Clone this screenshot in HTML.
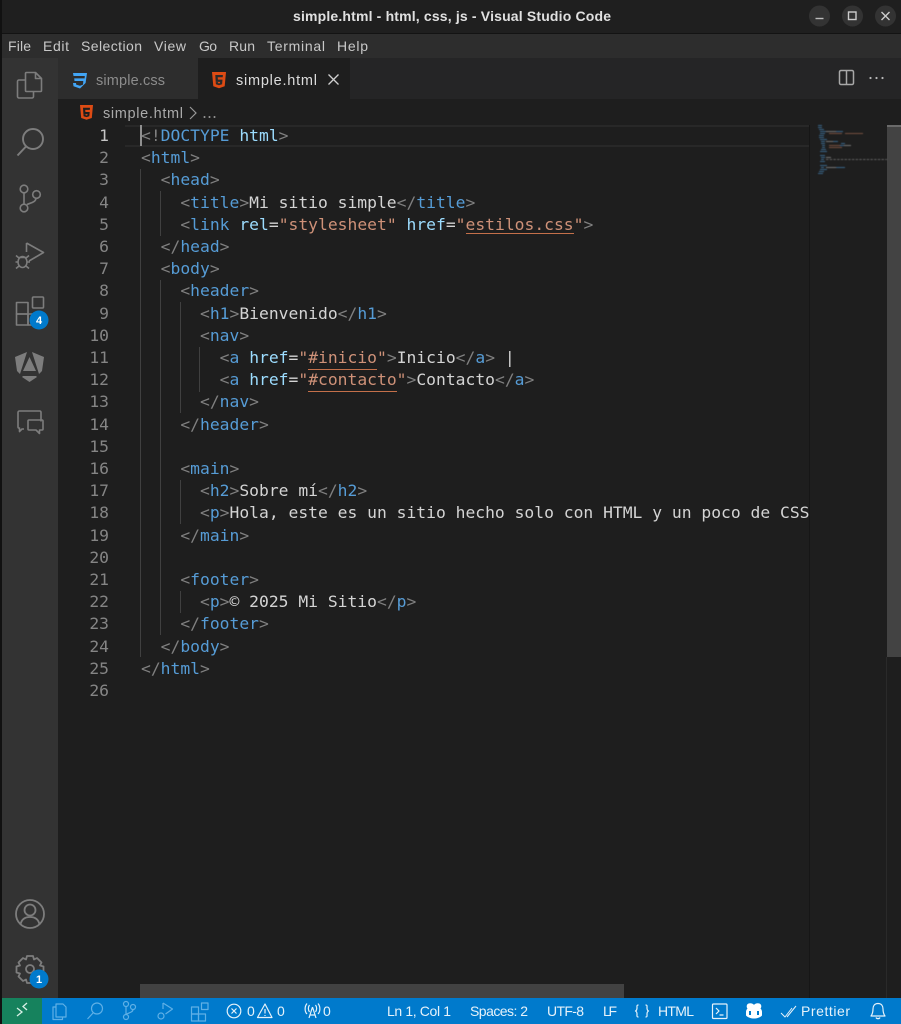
<!DOCTYPE html>
<html lang="es"><head><meta charset="utf-8"><title>simple.html - Visual Studio Code</title>
<style>
html,body{margin:0;padding:0;width:901px;height:1024px;overflow:hidden;background:#1e1e1e}
body{position:relative;filter:blur(.35px)}
.a{position:absolute}
#code,#nums{position:absolute;left:0;top:1px;width:901px;height:0}
#code div{position:absolute;left:141px;height:22px;line-height:22px;white-space:pre;font:16.33px/22px "DejaVu Sans Mono",monospace;color:#d4d4d4}
#nums div{position:absolute;width:109px;left:0;text-align:right;font:16.33px/22px "DejaVu Sans Mono",monospace;color:#858585}
.b{color:#808080}.t{color:#569cd6}.k{color:#9cdcfe}.s{color:#ce9178}
svg text{font-family:"Liberation Sans",sans-serif}
</style></head><body>
<div class="a" style="left:0;top:0;width:2px;height:1024px;background:#111"></div>
<div class="a" style="left:2px;top:0;width:899px;height:33px;background:#1f1f1f"></div>
<div class="a" style="left:2px;top:33px;width:899px;height:1px;background:#131313"></div>
<div class="a" style="left:2px;top:34px;width:899px;height:24px;background:#2d2d2d"></div>
<div class="a" style="left:2px;top:58px;width:56px;height:941px;background:#333"></div>
<div class="a" style="left:58px;top:58px;width:843px;height:41px;background:#252526"></div>
<div class="a" style="left:58px;top:58px;width:140px;height:41px;background:#2d2d2d"></div>
<div class="a" style="left:198px;top:58px;width:152px;height:41px;background:#1e1e1e"></div>
<div class="a" style="left:58px;top:99px;width:843px;height:900px;background:#1e1e1e"></div>
<div class="a" style="left:125px;top:125px;width:684px;height:22px;box-sizing:border-box;border-top:2px solid #282828;border-bottom:2px solid #282828"></div>
<div class="a" style="left:809px;top:125px;width:1px;height:874px;background:#161616"></div>
<div class="a" style="left:887px;top:125px;width:14px;height:532px;background:#434343"></div>
<div class="a" style="left:887px;top:125px;width:14px;height:2px;background:#6a6a6a"></div>
<div class="a" style="left:886px;top:657px;width:1px;height:342px;background:#2a2a2a"></div>
<div class="a" style="left:140px;top:984px;width:484px;height:14px;background:#424242"></div>
<div class="a" style="left:2px;top:998px;width:899px;height:26px;background:#007acc"></div>
<div class="a" style="left:2px;top:998px;width:40px;height:26px;background:#16825d"></div>

<div id="guides">
<div class="a" style="left:140px;top:169px;width:1px;height:488px;background:#404040"></div>
<div class="a" style="left:160px;top:191px;width:1px;height:45px;background:#404040"></div>
<div class="a" style="left:160px;top:280px;width:1px;height:355px;background:#404040"></div>
<div class="a" style="left:180px;top:302px;width:1px;height:111px;background:#404040"></div>
<div class="a" style="left:199px;top:347px;width:1px;height:45px;background:#404040"></div>
<div class="a" style="left:180px;top:480px;width:1px;height:44px;background:#404040"></div>
<div class="a" style="left:180px;top:591px;width:1px;height:22px;background:#404040"></div>
</div>

<div id="nums">
<div style="top:124px;color:#c6c6c6">1</div><div style="top:146.2px">2</div><div style="top:168.4px">3</div><div style="top:190.6px">4</div><div style="top:212.8px">5</div><div style="top:235px">6</div><div style="top:257.2px">7</div><div style="top:279.4px">8</div><div style="top:301.6px">9</div><div style="top:323.8px">10</div><div style="top:346px">11</div><div style="top:368.2px">12</div><div style="top:390.4px">13</div><div style="top:412.6px">14</div><div style="top:434.8px">15</div><div style="top:457px">16</div><div style="top:479.2px">17</div><div style="top:501.4px">18</div><div style="top:523.6px">19</div><div style="top:545.8px">20</div><div style="top:568px">21</div><div style="top:590.2px">22</div><div style="top:612.4px">23</div><div style="top:634.6px">24</div><div style="top:656.8px">25</div><div style="top:679px">26</div>
</div>

<div id="code">
<div style="top:124px"><span class="b">&lt;!</span><span class="t">DOCTYPE</span> <span class="k">html</span><span class="b">&gt;</span></div>
<div style="top:146.2px"><span class="b">&lt;</span><span class="t">html</span><span class="b">&gt;</span></div>
<div style="top:168.4px">  <span class="b">&lt;</span><span class="t">head</span><span class="b">&gt;</span></div>
<div style="top:190.6px">    <span class="b">&lt;</span><span class="t">title</span><span class="b">&gt;</span>Mi sitio simple<span class="b">&lt;/</span><span class="t">title</span><span class="b">&gt;</span></div>
<div style="top:212.8px">    <span class="b">&lt;</span><span class="t">link</span> <span class="k">rel</span>=<span class="s">"stylesheet"</span> <span class="k">href</span>=<span class="s">"estilos.css"</span><span class="b">&gt;</span></div>
<div style="top:235px">  <span class="b">&lt;/</span><span class="t">head</span><span class="b">&gt;</span></div>
<div style="top:257.2px">  <span class="b">&lt;</span><span class="t">body</span><span class="b">&gt;</span></div>
<div style="top:279.4px">    <span class="b">&lt;</span><span class="t">header</span><span class="b">&gt;</span></div>
<div style="top:301.6px">      <span class="b">&lt;</span><span class="t">h1</span><span class="b">&gt;</span>Bienvenido<span class="b">&lt;/</span><span class="t">h1</span><span class="b">&gt;</span></div>
<div style="top:323.8px">      <span class="b">&lt;</span><span class="t">nav</span><span class="b">&gt;</span></div>
<div style="top:346px">        <span class="b">&lt;</span><span class="t">a</span> <span class="k">href</span>=<span class="s">"#inicio"</span><span class="b">&gt;</span>Inicio<span class="b">&lt;/</span><span class="t">a</span><span class="b">&gt;</span> |</div>
<div style="top:368.2px">        <span class="b">&lt;</span><span class="t">a</span> <span class="k">href</span>=<span class="s">"#contacto"</span><span class="b">&gt;</span>Contacto<span class="b">&lt;/</span><span class="t">a</span><span class="b">&gt;</span></div>
<div style="top:390.4px">      <span class="b">&lt;/</span><span class="t">nav</span><span class="b">&gt;</span></div>
<div style="top:412.6px">    <span class="b">&lt;/</span><span class="t">header</span><span class="b">&gt;</span></div>
<div style="top:457px">    <span class="b">&lt;</span><span class="t">main</span><span class="b">&gt;</span></div>
<div style="top:479.2px">      <span class="b">&lt;</span><span class="t">h2</span><span class="b">&gt;</span>Sobre mí<span class="b">&lt;/</span><span class="t">h2</span><span class="b">&gt;</span></div>
<div style="top:501.4px">      <span class="b">&lt;</span><span class="t">p</span><span class="b">&gt;</span>Hola, este es un sitio hecho solo con HTML y un poco de CSS</div>
<div style="top:523.6px">    <span class="b">&lt;/</span><span class="t">main</span><span class="b">&gt;</span></div>
<div style="top:568px">    <span class="b">&lt;</span><span class="t">footer</span><span class="b">&gt;</span></div>
<div style="top:590.2px">      <span class="b">&lt;</span><span class="t">p</span><span class="b">&gt;</span>© 2025 Mi Sitio<span class="b">&lt;/</span><span class="t">p</span><span class="b">&gt;</span></div>
<div style="top:612.4px">    <span class="b">&lt;/</span><span class="t">footer</span><span class="b">&gt;</span></div>
<div style="top:634.6px">  <span class="b">&lt;/</span><span class="t">body</span><span class="b">&gt;</span></div>
<div style="top:656.8px"><span class="b">&lt;/</span><span class="t">html</span><span class="b">&gt;</span></div>
</div>

<div class="a" style="left:466px;top:233px;width:108px;height:1px;background:#c4704a"></div>
<div class="a" style="left:308px;top:369px;width:69px;height:1px;background:#c4704a"></div>
<div class="a" style="left:308px;top:391px;width:89px;height:1px;background:#c4704a"></div>
<div class="a" style="left:140px;top:125px;width:2px;height:21px;background:#8f8f8f"></div>

<svg class="a" style="left:0;top:0" width="901" height="1024" viewBox="0 0 901 1024" fill="none">
<defs><filter id="mm" x="-5%" y="-5%" width="110%" height="110%"><feGaussianBlur stdDeviation=".4"/></filter></defs>
<!-- title bar -->
<text x="293" y="21" font-size="14" font-weight="700" fill="#e0e0e0" textLength="318" lengthAdjust="spacing">simple.html - html, css, js - Visual Studio Code</text>
<circle cx="819.500" cy="16" r="10.500" fill="#333"/><circle cx="852.500" cy="16" r="10.500" fill="#333"/><circle cx="885.500" cy="16" r="10.500" fill="#333"/>
<path d="M815.500 18.500h8" stroke="#bbb" stroke-width="1.400"/>
<rect x="848.500" y="12" width="7.500" height="7.500" stroke="#ccc" stroke-width="1.400"/>
<path d="M881.500 12l8 8M889.500 12l-8 8" stroke="#ccc" stroke-width="1.400"/>
<!-- menu -->
<g font-size="14" fill="#c8c8c8">
<text x="8" y="51" textLength="23" lengthAdjust="spacing">File</text>
<text x="43" y="51" textLength="26" lengthAdjust="spacing">Edit</text>
<text x="81" y="51" textLength="61" lengthAdjust="spacing">Selection</text>
<text x="154" y="51" textLength="32" lengthAdjust="spacing">View</text>
<text x="199" y="51" textLength="18" lengthAdjust="spacing">Go</text>
<text x="229" y="51" textLength="26" lengthAdjust="spacing">Run</text>
<text x="267" y="51" textLength="58" lengthAdjust="spacing">Terminal</text>
<text x="337" y="51" textLength="31" lengthAdjust="spacing">Help</text>
</g>
<!-- tabs -->
<path d="M73 73h14l-1.400 10L80 88.500l-6.500-2.300-.5-3.200h3l.2 1.600 3.800 1.200 3-1.200.3-3.600H74.500l-.3-2.600h10.400l.2-2.400H73.500z" fill="#42a5f5"/>
<text x="96" y="85" font-size="14.500" fill="#8c8c8c" textLength="69" lengthAdjust="spacing">simple.css</text>
<g transform="translate(212 72)"><path d="M0 0h14l-1.300 14.300L7 16.200l-5.700-1.900z" fill="#dd4b14"/><path d="M3.300 3h7.600l-.2 2.300H5.700l.2 2.300h4.600l-.4 4.600L7 13.200l-3.100-1-.2-2.100H6l.1 1 .9.3 1-.3.100-1.200H3.700z" fill="#2a2a2a"/></g>
<text x="236" y="85" font-size="14.500" fill="#dcdcdc" textLength="81" lengthAdjust="spacing">simple.html</text>
<path d="M328.500 74.500l10 10M338.500 74.500l-10 10" stroke="#d0d0d0" stroke-width="1.300"/>
<rect x="839.500" y="70.500" width="14" height="14" rx="1.500" stroke="#a8a8a8" stroke-width="1.500"/><path d="M846.500 71v13" stroke="#a8a8a8" stroke-width="1.500"/>
<g fill="#b8b8b8"><circle cx="870.500" cy="78" r="1.100"/><circle cx="876.500" cy="78" r="1.100"/><circle cx="882.500" cy="78" r="1.100"/></g>
<!-- breadcrumbs -->
<g transform="translate(80 105)"><path d="M0 0h13l-1.200 13L6.500 14.800 1.200 13z" fill="#dd4b14"/><path d="M3 2.800h7l-.2 2.100H5.200l.2 2.100h4.300l-.4 4.200-2.800.9-2.900-.9-.2-2h2.100l.1 1 .9.3.9-.3.100-1.100H3.400z" fill="#1e1e1e"/></g>
<text x="103" y="118" font-size="14.500" fill="#aaa" textLength="80" lengthAdjust="spacing">simple.html</text>
<path d="M190 107l6 6-6 6" stroke="#999" stroke-width="1.200"/>
<g fill="#9a9a9a"><circle cx="204.500" cy="117" r="1"/><circle cx="209.500" cy="117" r="1"/><circle cx="214.500" cy="117" r="1"/></g>
<!-- activity bar -->
<g stroke="#7d7d7d" stroke-width="1.600" stroke-linejoin="round">
<path d="M25 80h-6a1.500 1.500 0 0 0-1.500 1.500v15a1.500 1.500 0 0 0 1.500 1.500h13a1.500 1.500 0 0 0 1.500-1.500V92"/>
<path d="M26.500 72.500h9l6 6v12a1 1 0 0 1-1 1h-14a1 1 0 0 1-1-1v-17a1 1 0 0 1 1-1zM35.500 72.500v6h6"/>
<circle cx="33" cy="139" r="10" stroke-width="1.900"/><path d="M26 146.500l-8.500 9" stroke-width="2"/>
<circle cx="24" cy="189" r="3.800"/><circle cx="24" cy="208" r="3.800"/><circle cx="36.500" cy="194.500" r="3.800"/>
<path d="M24 193v11M36 198.500c-.5 4-6 4.500-9 6"/>
<path d="M26.500 243l17 9.500-14.500 8.500M26.500 243v9"/>
<ellipse cx="22.500" cy="262" rx="4.500" ry="5.500"/><path d="M19 257.500h7M16 255.500l3 2.500M29 255.500l-3 2.500M15.500 262h3M26.500 262h3.500M16 268.500l3-2.500M29 268.500l-3-2.500"/>
<rect x="16.500" y="302.500" width="11.500" height="11.500"/><rect x="16.500" y="314" width="11.500" height="11"/><rect x="28" y="314" width="11" height="11"/><rect x="32.500" y="297" width="11" height="11" rx="1"/>
<path d="M22 411h18a1.500 1.500 0 0 1 1 1.500v9M24 429h-2l-2.500 2.500V428h-1A1 1 0 0 1 18 427v-14.500a1.500 1.500 0 0 1 1.500-1.500h3"/>
<path d="M29 420h13a1 1 0 0 1 1 1v8a1 1 0 0 1-1 1h-2.500v3.500L36 430h-7a1 1 0 0 1-1-1v-8a1 1 0 0 1 1-1z"/>
<circle cx="30" cy="914" r="14" stroke-width="1.800"/><circle cx="30" cy="910" r="5.500" stroke-width="1.800"/><path d="M20.500 924.500c1-5 4-7.500 9.500-7.500s8.500 2.500 9.500 7.500" stroke-width="1.800"/>
<circle cx="30" cy="969" r="4" stroke-width="1.800"/>
<path d="M27 956h6l1 3.500 3-1.500 4.500 4.500-1.500 3 3.500 1v6l-3.500 1 1.500 3-4.500 4.500-3-1.500-1 3.500h-6l-1-3.500-3 1.500-4.500-4.500 1.500-3-3.500-1v-6l3.500-1-1.500-3 4.500-4.500 3 1.500z" stroke-width="1.800"/>
</g>
<path d="M27 352l-12 5 2 14 3 3zM32 352l12 5-2 14-3 3z" fill="#7d7d7d"/><path d="M29.500 357l-6.500 14h13z" fill="#7d7d7d"/><path d="M23 376h13l1 1-7.500 5-7.500-5z" fill="#7d7d7d"/>
<circle cx="39" cy="320" r="9.500" fill="#007acc"/><text x="39" y="324" font-size="11" font-weight="700" fill="#fff" text-anchor="middle">4</text>
<circle cx="39" cy="979" r="9.500" fill="#007acc"/><text x="39" y="983" font-size="11" font-weight="700" fill="#fff" text-anchor="middle">1</text>
<!-- minimap -->
<g filter="url(#mm)" opacity=".62">
<g fill="#4a8fc8">
<rect x="818" y="125" width="4" height="1"/>
<rect x="818" y="127" width="4" height="1"/><rect x="819" y="129" width="5" height="1"/><rect x="820" y="131" width="6" height="1"/><rect x="820" y="133" width="5" height="1"/>
<rect x="819" y="135" width="5" height="1"/><rect x="819" y="137" width="5" height="1"/><rect x="820" y="139" width="7" height="1"/><rect x="821" y="141" width="4" height="1"/><rect x="821" y="143" width="4" height="1"/><rect x="822" y="145" width="3" height="1"/><rect x="822" y="147" width="3" height="1"/><rect x="821" y="149" width="5" height="1"/><rect x="820" y="151" width="7" height="1"/>
<rect x="820" y="155" width="5" height="1"/><rect x="821" y="157" width="4" height="1"/><rect x="821" y="159" width="3" height="1"/><rect x="820" y="161" width="5" height="1"/>
<rect x="820" y="165" width="7" height="1"/><rect x="821" y="167" width="3" height="1"/><rect x="820" y="169" width="7" height="1"/><rect x="819" y="171" width="5" height="1"/><rect x="818" y="173" width="5" height="1"/>
<rect x="836" y="131" width="7" height="1"/><rect x="833" y="141" width="5" height="1"/><rect x="841" y="143" width="4" height="1"/><rect x="840" y="145" width="4" height="1"/><rect x="836" y="167" width="9" height="1"/>
</g>
<g fill="#a8a8a8">
<rect x="826" y="131" width="10" height="1"/><rect x="826" y="141" width="7" height="1"/><rect x="844" y="145" width="7" height="1"/><rect x="826" y="157" width="5" height="1"/><rect x="826" y="167" width="10" height="1"/>
</g>
<path d="M826 159.500H887" stroke="#a8a8a8" stroke-width="1" stroke-dasharray="2.500 1.200" opacity=".75"/>
<g fill="#a86e52">
<rect x="829" y="133" width="13" height="1"/><rect x="845" y="133" width="18" height="1"/><rect x="829" y="145" width="11" height="1"/><rect x="829" y="147" width="13" height="1"/>
</g>
</g>
<!-- status bar -->
<path d="M17 1016l5-4-5-4" stroke="#d8f0e6" stroke-width="1.300"/><path d="M27 1003l-4 3.500 4 3.500" stroke="#d8f0e6" stroke-width="1.300"/>
<g stroke="#5fb0e6" stroke-width="1.200" stroke-linejoin="round">
<path d="M56 1007h-3v12.500h9.500V1017M56 1004h7l3 3v10h-10z"/>
<circle cx="97" cy="1008.500" r="5.500"/><path d="M93 1013l-5.500 6"/>
<circle cx="126" cy="1004" r="2.500"/><circle cx="126" cy="1017" r="2.500"/><circle cx="133" cy="1007" r="2.500"/><path d="M126 1006.500v8M133 1009.500c0 3-5 3.500-7 5"/>
<path d="M163 1003l9.500 6-7 5M163 1003v6"/><circle cx="161" cy="1016" r="3"/>
<rect x="191.500" y="1007" width="7" height="7"/><rect x="191.500" y="1014" width="7" height="7"/><rect x="198.500" y="1014" width="7" height="7"/><rect x="201.500" y="1003" width="6.500" height="6.500"/>
</g>
<g stroke="#fff" stroke-width="1.200" stroke-linejoin="round" opacity=".9">
<circle cx="234" cy="1011" r="6.800"/><path d="M231.500 1008.500l5 5M236.500 1008.500l-5 5"/>
<path d="M265 1004l7 13.500h-14.500zM265 1009v4.500M265 1015v1"/>
<path d="M312.500 1007l-3.500 11M312.500 1007l3.500 11M310 1015h5M309.500 1005c-1.500 2-1.500 5 0 7M315.500 1005c1.500 2 1.500 5 0 7M307 1003.500c-2.500 3-2.500 8 0 10.500M318 1003.500c2.500 3 2.500 8 0 10.500"/>
<path d="M638.500 1005c-2 0-1.500 1-1.500 3s-.5 2.500-1.500 3c1 .5 1.500 1 1.500 3s-.5 3 1.500 3M645.500 1005c2 0 1.500 1 1.500 3s.5 2.500 1.500 3c-1 .5-1.500 1-1.500 3s.5 3-1.500 3"/>
<rect x="712.500" y="1004" width="14.500" height="14.500" rx="1"/><path d="M716 1008l3 3-3 3M719.500 1015h4"/>
<path d="M781 1013l4 4 7-9M787 1017l9-11" stroke-width="1"/>
<path d="M878 1003.500c-3.500 0-5 2.500-5 5.500 0 3.500-.5 5-2 7h14c-1.500-2-2-3.500-2-7 0-3-1.500-5.500-5-5.500zM876 1017.500c.5 1.500 3.500 1.500 4 0"/>
</g>
<path d="M754 1005c-1-2-6-2.500-7 0-.7 1.500 0 3 .5 3.500-1 1-1.500 2-1.500 3.500v3.500c2 2 5 3 8 3s6-1 8-3V1012c0-1.500-.5-2.500-1.500-3.500.5-.5 1.200-2 .5-3.500-1-2.500-6-2-7 0z" fill="#fff"/>
<rect x="749" y="1011" width="2" height="4" fill="#007acc"/><rect x="757" y="1011" width="2" height="4" fill="#007acc"/>
<g font-size="14" fill="#e6f2fa">
<text x="247" y="1016">0</text><text x="277" y="1016">0</text><text x="323" y="1016">0</text>
<text x="387" y="1016" textLength="64" lengthAdjust="spacing">Ln 1, Col 1</text>
<text x="470" y="1016" textLength="58" lengthAdjust="spacing">Spaces: 2</text>
<text x="547" y="1016" textLength="37" lengthAdjust="spacing">UTF-8</text>
<text x="603" y="1016" textLength="14" lengthAdjust="spacing">LF</text>
<text x="658" y="1016" textLength="36" lengthAdjust="spacing">HTML</text>
<text x="801" y="1016" textLength="49" lengthAdjust="spacing">Prettier</text>
</g>
</svg>
</body></html>
